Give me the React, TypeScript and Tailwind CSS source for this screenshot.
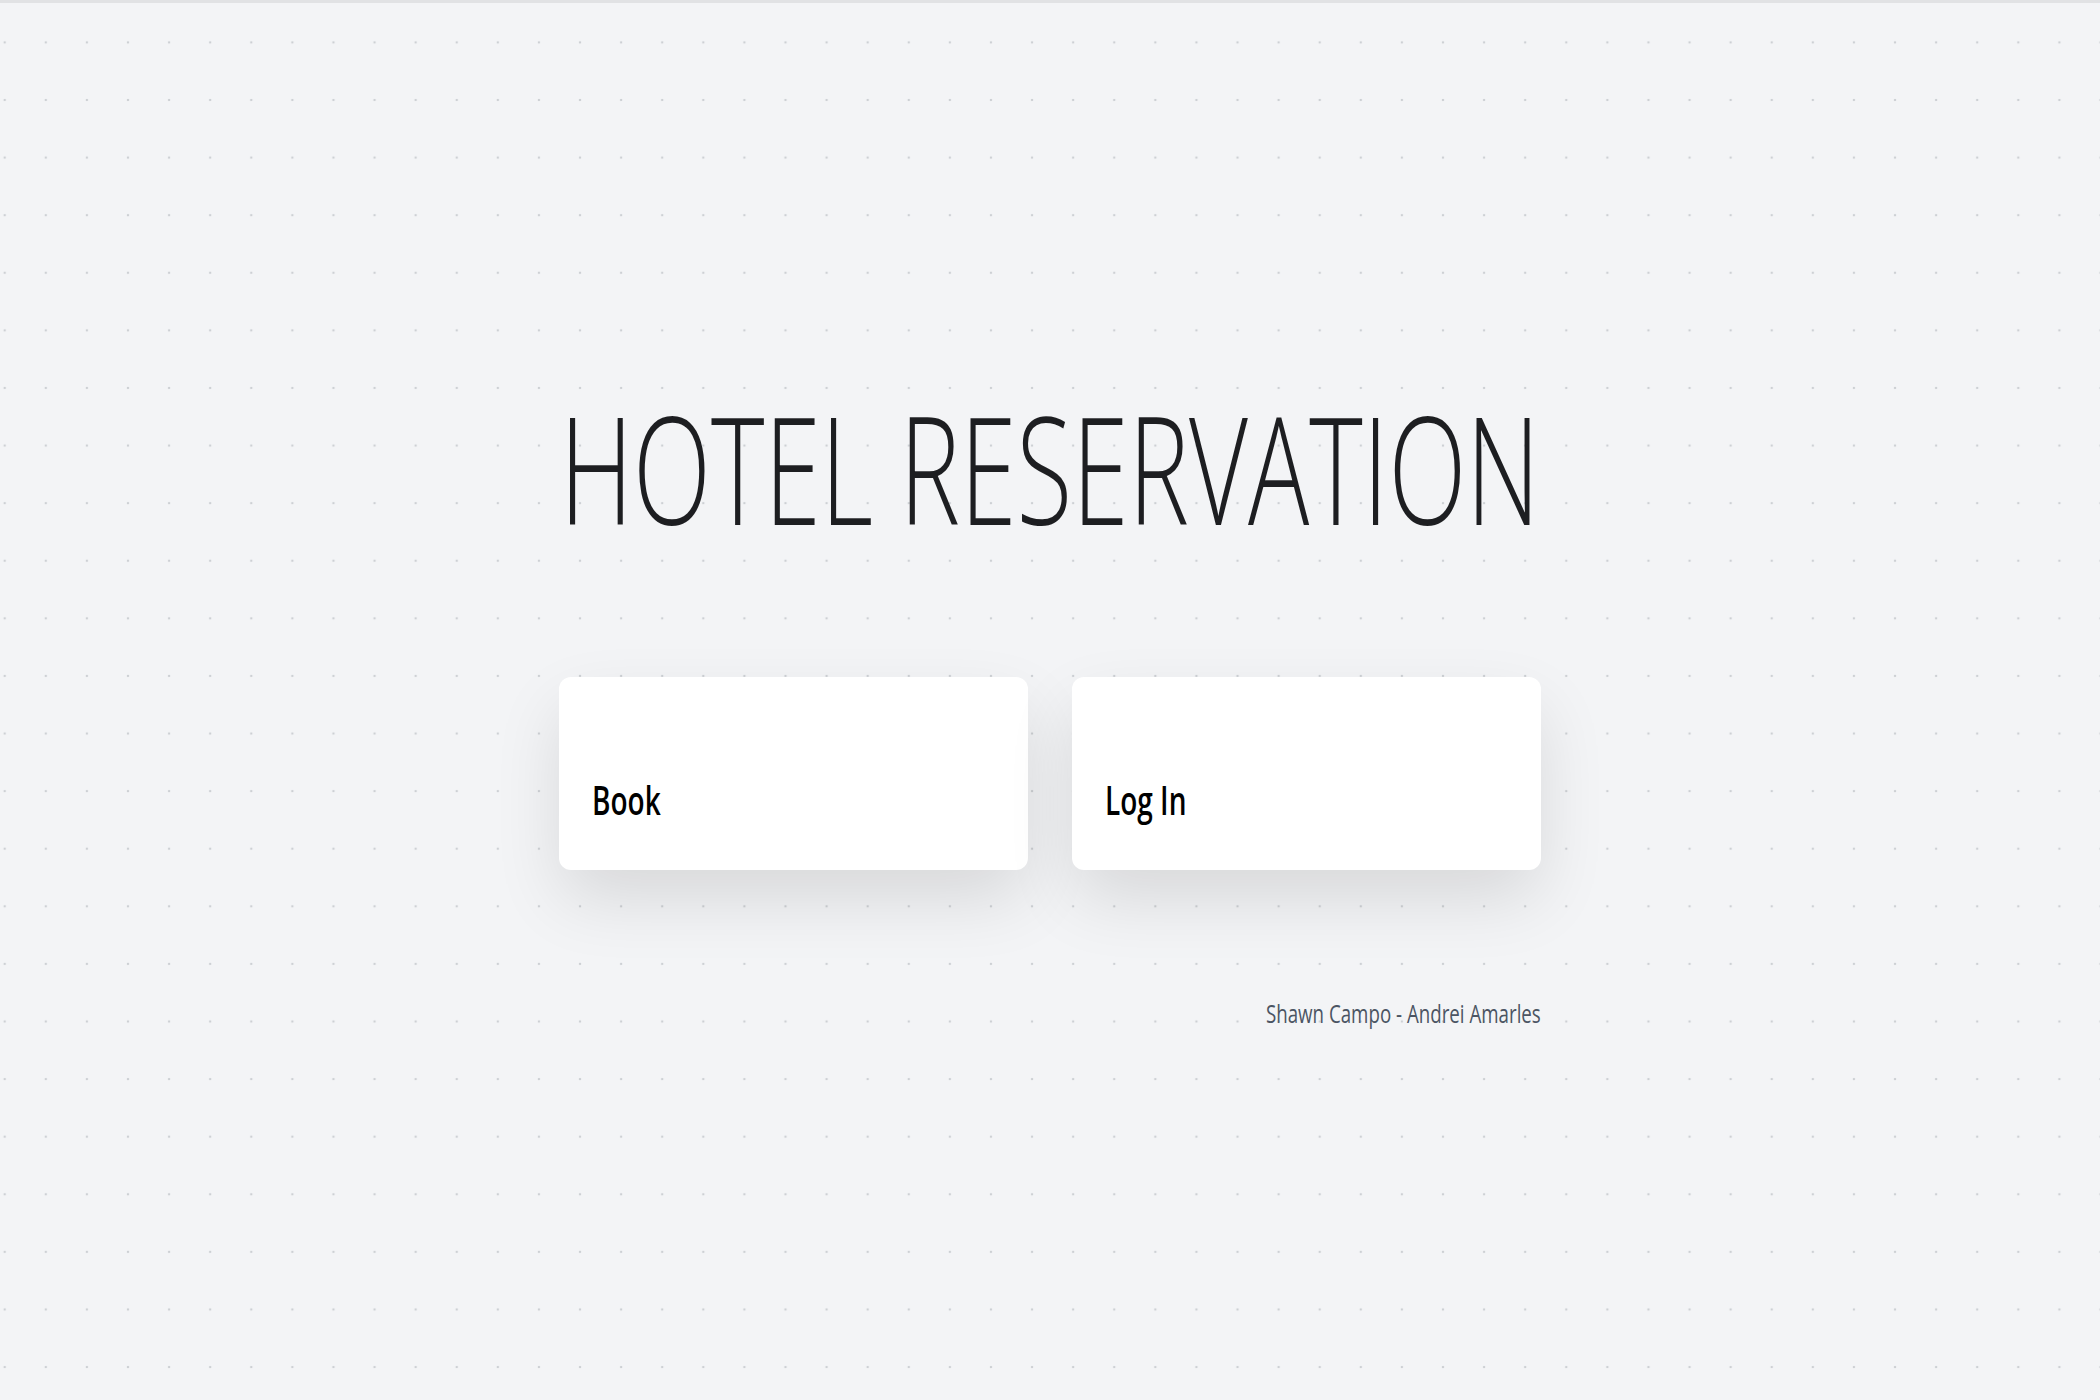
import React from "react";

const cards = [{ label: "Book" }, { label: "Log In" }];

export default function App() {
  return (
    <div
      className="min-h-screen w-full border-t-[3px] border-[#e1e2e4] bg-[#f3f4f6] bg-[radial-gradient(circle,#cdd0d4_1.1px,transparent_1.6px)] bg-[size:41.1px_57.6px] bg-[position:-15.85px_10.6px] font-['Open_Sans','Liberation_Sans',sans-serif]"
    >
      <div className="mx-auto flex w-[982px] flex-col pt-[374px]">
        <h1 className="flex justify-center text-[150px] leading-[1.2] font-light text-[#1d1e21]">
          <span className="inline-block origin-center scale-x-[0.68] whitespace-nowrap">
            HOTEL RESERVATION
          </span>
        </h1>

        <div className="mt-[120px] grid grid-cols-2 gap-[44px]">
          {cards.map((card) => (
            <button
              key={card.label}
              className="flex h-[193px] cursor-pointer items-end rounded-xl bg-white px-[33px] pb-[50px] text-left shadow-[0_30px_70px_-4px_rgba(0,0,0,0.12)]"
            >
              <span className="inline-block origin-left scale-x-[0.7] text-[40px] leading-none font-semibold text-black">
                {card.label}
              </span>
            </button>
          ))}
        </div>

        <div className="mt-[130px] flex justify-end">
          <span className="inline-block origin-right scale-x-[0.72] text-[26px] leading-none text-[#4b5563]">
            Shawn Campo - Andrei Amarles
          </span>
        </div>
      </div>
    </div>
  );
}
